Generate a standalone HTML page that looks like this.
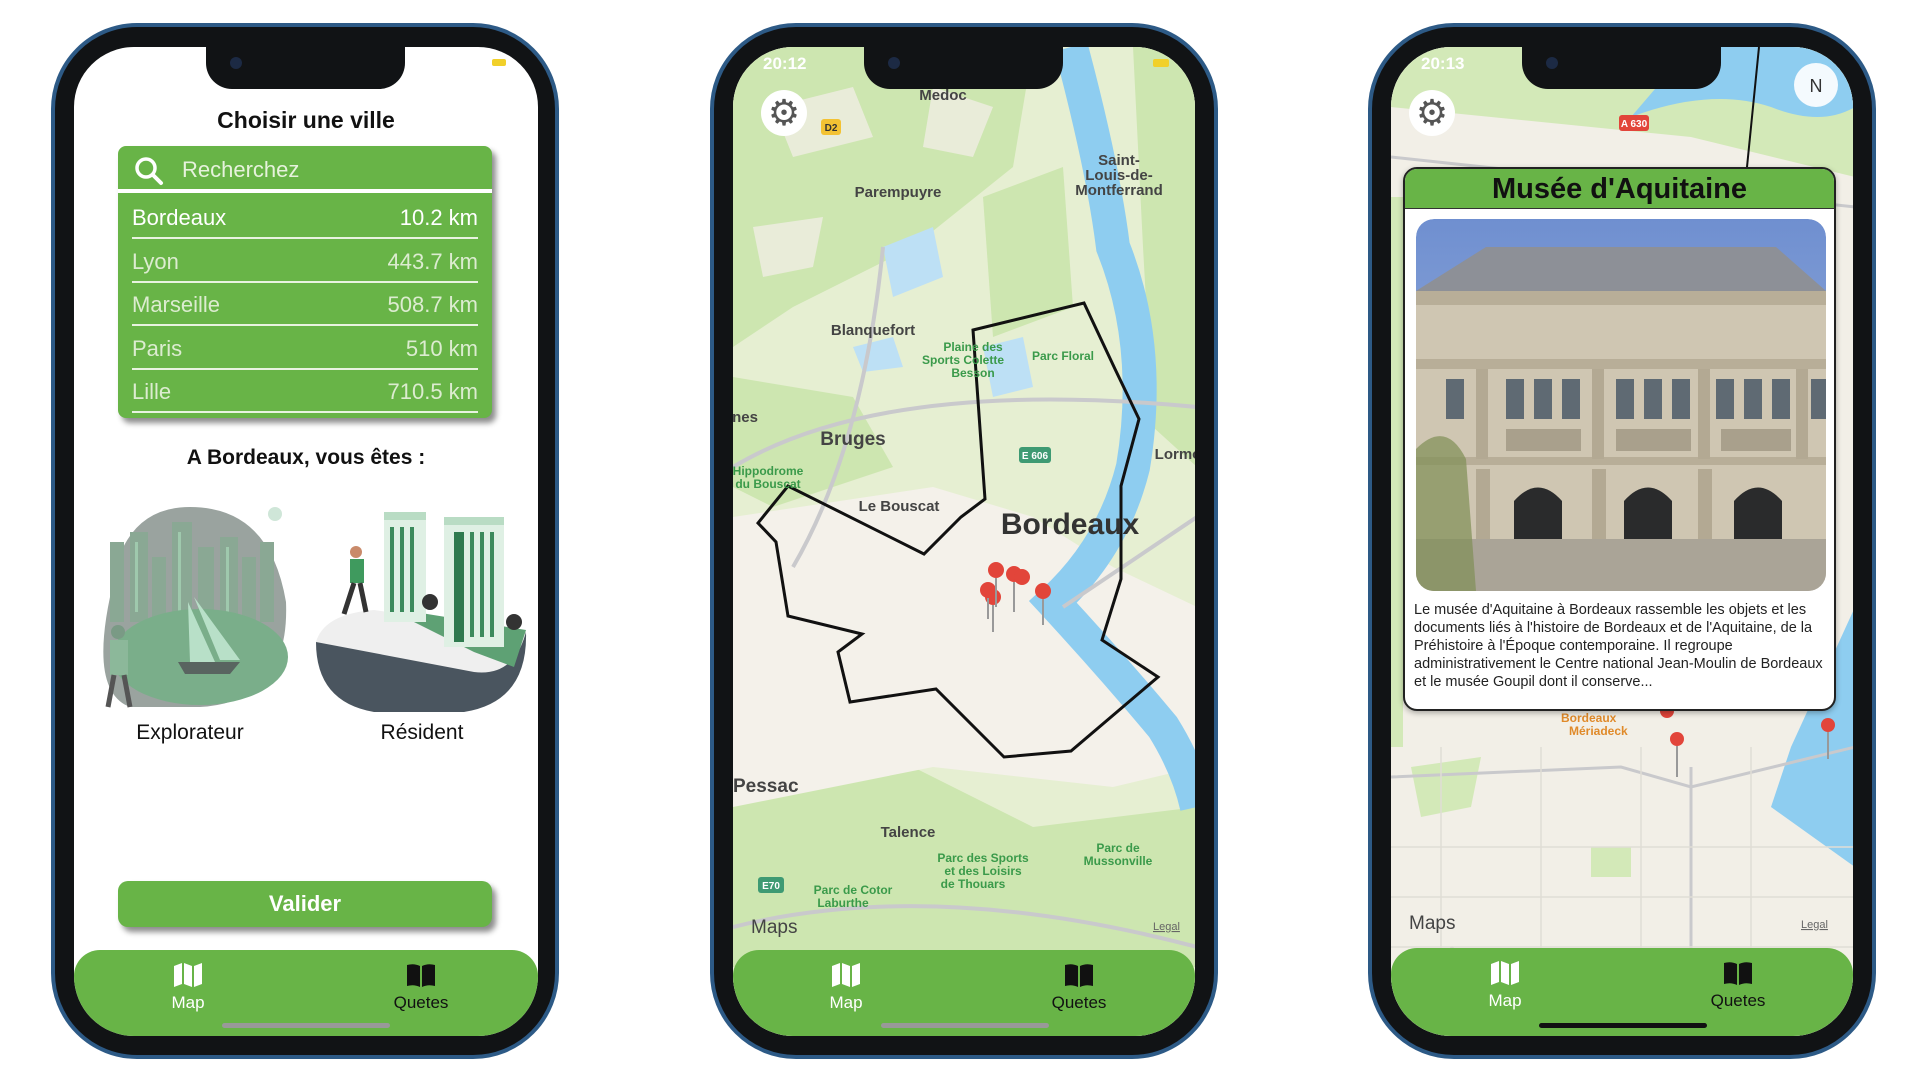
<!DOCTYPE html>
<html><head><meta charset="utf-8"><style>
*{margin:0;padding:0;box-sizing:border-box}
body{width:1920px;height:1080px;background:#fff;position:relative;overflow:hidden;font-family:"Liberation Sans",sans-serif}
.phone{position:absolute;top:23px;width:508px;height:1036px;border-radius:86px;background:#111315;border:4px solid #2d5a86}
.screen{position:absolute;overflow:hidden;border-radius:60px;background:#fff}
.notch{position:absolute;top:47px;width:199px;height:42px;background:#111315;border-radius:0 0 26px 26px;z-index:5}
.cam{position:absolute;top:10px;left:24px;width:12px;height:12px;border-radius:50%;background:#1c2a44}
.tab{position:absolute;left:0;right:0;bottom:0;height:86px;background:#68b447;z-index:3}
.tab .it{position:absolute;top:12px;text-align:center;font-size:17px;width:100px}
.home{position:absolute;bottom:8px;height:5px;border-radius:3px;background:#999;width:168px;z-index:4}
.row{position:absolute;left:14px;right:14px;height:43px;border-bottom:2px solid #e8f3e0;color:#dcecd0;font-size:22px;line-height:43px}
.row span{float:right}
</style></head><body>

<!-- PHONE 1 -->
<div class="phone" style="left:51px"></div>
<div class="screen" style="left:74px;top:47px;width:464px;height:989px">
  <div style="position:absolute;top:60px;width:100%;text-align:center;font-size:23px;font-weight:bold;color:#111">Choisir une ville</div>
  <div style="position:absolute;left:44px;top:99px;width:374px;height:272px;background:#68b447;border-radius:8px;box-shadow:4px 5px 6px rgba(0,0,0,.45)">
    <div style="position:absolute;left:0;right:0;top:0;height:47px;border-bottom:4px solid #fff">
      <svg style="position:absolute;left:16px;top:10px" width="30" height="30" viewBox="0 0 30 30"><circle cx="12" cy="12" r="9" fill="none" stroke="#fff" stroke-width="3.5"/><line x1="19" y1="19" x2="27" y2="27" stroke="#fff" stroke-width="4" stroke-linecap="round"/></svg>
      <div style="position:absolute;left:64px;top:11px;color:#e6f2dc;font-size:22px">Recherchez</div>
    </div>
    <div class="row" style="top:50px;color:#fff">Bordeaux<span>10.2 km</span></div>
    <div class="row" style="top:94px">Lyon<span>443.7 km</span></div>
    <div class="row" style="top:137px">Marseille<span>508.7 km</span></div>
    <div class="row" style="top:181px">Paris<span>510 km</span></div>
    <div class="row" style="top:224px">Lille<span>710.5 km</span></div>
  </div>
  <div style="position:absolute;top:399px;width:100%;text-align:center;font-size:21px;font-weight:bold;color:#111">A Bordeaux, vous êtes :</div>
  <svg style="position:absolute;left:16px;top:455px" width="200" height="210" viewBox="0 0 200 210">
    <path d="M20 95 Q30 5 100 5 Q180 5 196 100 Q200 200 110 205 L40 205 Q0 190 20 95Z" fill="#9aa39f"/>
    <g fill="#8aa894"><rect x="20" y="40" width="14" height="80"/><rect x="40" y="30" width="18" height="90"/><rect x="62" y="55" width="14" height="65"/><rect x="82" y="20" width="20" height="100"/><rect x="108" y="45" width="16" height="75"/><rect x="130" y="35" width="18" height="85"/><rect x="152" y="55" width="14" height="65"/><rect x="170" y="40" width="14" height="80"/></g>
    <g fill="#a8d8b8" opacity=".7"><rect x="45" y="40" width="3" height="70"/><rect x="88" y="30" width="3" height="80"/><rect x="136" y="45" width="3" height="70"/></g>
    <ellipse cx="110" cy="155" rx="88" ry="48" fill="#7aae8a"/>
    <path d="M98 100 L100 160 L125 160Z M104 95 L130 158 L150 158Z" fill="#b8e0c8"/>
    <path d="M88 160 L150 160 L140 172 L95 172Z" fill="#596460"/>
    <circle cx="28" cy="130" r="7" fill="#7a9a85"/><rect x="20" y="138" width="18" height="35" fill="#8cb89a"/><path d="M24 173 L18 205 M34 173 L40 205" stroke="#555" stroke-width="5"/>
    <circle cx="185" cy="12" r="7" fill="#cfe6d8"/>
  </svg>
  <svg style="position:absolute;left:240px;top:455px" width="214" height="210" viewBox="0 0 214 210">
    <path d="M2 140 Q2 200 60 210 L150 210 Q214 200 212 130 L60 110Z" fill="#4a555f"/>
    <path d="M2 140 Q10 112 60 108 L212 130 Q200 175 160 170Z" fill="#efefef"/>
    <path d="M70 105 L212 128 L200 165 L160 150 Z" fill="#5ea174"/>
    <rect x="70" y="10" width="42" height="110" fill="#dff0e4"/><rect x="70" y="10" width="42" height="8" fill="#b9dcc4"/>
    <rect x="130" y="15" width="60" height="130" fill="#dff0e4"/><rect x="130" y="15" width="60" height="8" fill="#b9dcc4"/><rect x="140" y="30" width="10" height="110" fill="#2f7a4f"/>
    <g fill="#3c8a5c"><rect x="76" y="25" width="4" height="85"/><rect x="86" y="25" width="4" height="85"/><rect x="96" y="25" width="4" height="85"/><rect x="156" y="30" width="4" height="105"/><rect x="166" y="30" width="4" height="105"/><rect x="176" y="30" width="4" height="105"/></g>
    <circle cx="116" cy="100" r="8" fill="#333"/><circle cx="200" cy="120" r="8" fill="#333"/>
    <circle cx="42" cy="50" r="6" fill="#c98a6a"/><rect x="36" y="57" width="14" height="24" fill="#3f9a5e"/><path d="M40 81 L30 112 M46 81 L52 110" stroke="#333" stroke-width="5"/>
  </svg>
  <div style="position:absolute;left:16px;width:200px;top:674px;text-align:center;font-size:21px;color:#111">Explorateur</div>
  <div style="position:absolute;left:248px;width:200px;top:674px;text-align:center;font-size:21px;color:#111">Résident</div>
  <div style="position:absolute;left:44px;top:834px;width:374px;height:46px;background:#68b447;border-radius:10px;box-shadow:4px 5px 6px rgba(0,0,0,.45);color:#fff;font-size:22px;font-weight:bold;text-align:center;line-height:46px">Valider</div>
  <div class="tab" style="border-radius:26px 26px 0 0">
    <div class="it" style="left:64px;color:#fff"><svg width="30" height="26" viewBox="0 0 30 26"><path d="M1 4 L9 1 L9 22 L1 25Z M11 1 L19 4 L19 25 L11 22Z M21 4 L29 1 L29 22 L21 25Z" fill="#fff"/></svg><br>Map</div>
    <div class="it" style="left:297px;color:#111"><svg width="30" height="26" viewBox="0 0 30 26"><path d="M1 3 Q8 1 14 4 L14 25 Q8 22 1 24Z M16 4 Q22 1 29 3 L29 24 Q22 22 16 25Z" fill="#111"/></svg><br>Quetes</div>
  </div>
  <div class="home" style="left:148px"></div>
  <div style="position:absolute;right:32px;top:12px;width:14px;height:7px;background:#f1d02a;border-radius:2px"></div>
</div>
<div class="notch" style="left:206px"><div class="cam"></div></div>

<!-- PHONE 2 -->
<div class="phone" style="left:710px"></div>
<div class="screen" style="left:733px;top:47px;width:462px;height:989px;background:#f3f0e8">
  <svg width="464" height="989" viewBox="0 0 464 989" style="position:absolute;left:0;top:0;font-family:'Liberation Sans',sans-serif">
    <rect width="464" height="989" fill="#e6efd2"/>
    <g fill="#cde6b0">
      <path d="M0 0 H300 L280 120 L180 200 L60 260 L0 300Z"/><path d="M250 150 L330 120 L340 260 L260 290Z"/>
      <path d="M400 0 H464 V420 L420 380 L410 200Z"/><path d="M0 330 L120 350 L160 420 L40 460 L0 440Z"/>
      <path d="M0 740 L180 720 L300 780 L464 760 V920 H0Z"/>
    </g>
    <g fill="#f0eee4" opacity=".8"><path d="M40 60 L120 40 L140 90 L60 110Z"/><path d="M200 40 L260 60 L240 110 L190 100Z"/><path d="M20 180 L90 170 L80 220 L30 230Z"/></g>
    <g fill="#bde0f5"><path d="M150 200 L200 180 L210 230 L160 250Z"/><path d="M250 300 L290 290 L300 340 L260 350Z"/><path d="M120 300 L160 290 L170 320 L130 325Z"/></g>
    <path d="M0 470 L200 440 L300 470 L380 520 L464 560 V720 L380 740 L200 720 L0 760Z" fill="#f4f1ea"/>
    <path d="M338 0 Q370 120 380 200 Q420 300 400 420 Q380 500 320 555 Q380 620 430 680 Q455 720 464 760" fill="none" stroke="#8ecdf0" stroke-width="34"/>
    <g fill="none" stroke="#c9c9cc" stroke-width="4"><path d="M0 420 Q150 330 464 360"/><path d="M0 880 Q200 830 464 900"/><path d="M150 200 Q130 400 60 520"/><path d="M464 470 L330 560"/></g>
    <path d="M240 283 L351 256 L382 322 L406 372 L388 439 L388 532 L369 593 L425 630 L338 704 L271 710 L203 642 L117 655 L105 605 L129 587 L55 569 L43 495 L25 476 L55 439 L191 507 L228 470 L252 452Z" fill="none" stroke="#111" stroke-width="3"/>
    <g font-size="15" fill="#444" font-weight="bold" text-anchor="middle">
      <text x="165" y="150">Parempuyre</text><text x="140" y="288" >Blanquefort</text><text x="120" y="398" font-size="19">Bruges</text><text x="166" y="464">Le Bouscat</text><text x="175" y="790">Talence</text><text x="210" y="53">Medoc</text>
      <text x="386" y="118">Saint-</text><text x="386" y="133">Louis-de-</text><text x="386" y="148">Montferrand</text>
      <text x="337" y="487" font-size="30" fill="#333">Bordeaux</text><text x="0" y="745" font-size="19" text-anchor="start">Pessac</text>
      <text x="445" y="412">Lormo</text><text x="12" y="375">nes</text>
    </g>
    <g font-size="12" fill="#3a9a4a" text-anchor="middle" font-weight="bold">
      <text x="240" y="304">Plaine des</text><text x="230" y="317">Sports Colette</text><text x="240" y="330">Besson</text><text x="330" y="313">Parc Floral</text>
      <text x="35" y="428">Hippodrome</text><text x="35" y="441">du Bouscat</text>
      <text x="250" y="815">Parc des Sports</text><text x="250" y="828">et des Loisirs</text><text x="240" y="841">de Thouars</text>
      <text x="120" y="847">Parc de Cotor</text><text x="110" y="860">Laburthe</text><text x="385" y="805">Parc de</text><text x="385" y="818">Mussonville</text>
    </g>
    <rect x="286" y="400" width="32" height="16" rx="3" fill="#3e9a73"/><text x="302" y="412" font-size="10" fill="#fff" text-anchor="middle" font-weight="bold">E 606</text>
    <rect x="25" y="830" width="26" height="16" rx="3" fill="#3e9a73"/><text x="38" y="842" font-size="10" fill="#fff" text-anchor="middle" font-weight="bold">E70</text>
    <rect x="88" y="72" width="20" height="16" rx="3" fill="#f3c233"/><text x="98" y="84" font-size="10" fill="#333" text-anchor="middle" font-weight="bold">D2</text>
    <g fill="#e2453a"><circle cx="263" cy="523" r="8"/><circle cx="281" cy="527" r="8"/><circle cx="289" cy="530" r="8"/><circle cx="255" cy="543" r="8"/><circle cx="260" cy="550" r="8"/><circle cx="310" cy="544" r="8"/></g>
    <g stroke="#999" stroke-width="2"><path d="M263 531 V560 M281 535 V565 M255 551 V572 M260 558 V585 M310 552 V578"/></g>
    <text x="18" y="886" font-size="19" fill="#444"> Maps</text><text x="420" y="883" font-size="11" fill="#666" text-decoration="underline">Legal</text>
    <text x="30" y="22" font-size="17" fill="#fff" font-weight="bold">20:12</text>
    <rect x="420" y="12" width="16" height="8" rx="2" fill="#f1d02a"/>
  </svg>
  <div style="position:absolute;left:28px;top:43px;width:46px;height:46px;border-radius:50%;background:#fff;text-align:center;line-height:46px;font-size:36px;color:#555">⚙</div>
  <div class="tab" style="border-radius:26px 26px 0 0">
    <div class="it" style="left:63px;color:#fff"><svg width="30" height="26" viewBox="0 0 30 26"><path d="M1 4 L9 1 L9 22 L1 25Z M11 1 L19 4 L19 25 L11 22Z M21 4 L29 1 L29 22 L21 25Z" fill="#fff"/></svg><br>Map</div>
    <div class="it" style="left:296px;color:#111"><svg width="30" height="26" viewBox="0 0 30 26"><path d="M1 3 Q8 1 14 4 L14 25 Q8 22 1 24Z M16 4 Q22 1 29 3 L29 24 Q22 22 16 25Z" fill="#111"/></svg><br>Quetes</div>
  </div>
  <div class="home" style="left:148px"></div>
</div>
<div class="notch" style="left:864px"><div class="cam"></div></div>

<!-- PHONE 3 -->
<div class="phone" style="left:1368px"></div>
<div class="screen" style="left:1391px;top:47px;width:462px;height:989px;background:#f3f0e8">
  <svg width="464" height="989" viewBox="0 0 464 989" style="position:absolute;left:0;top:0;font-family:'Liberation Sans',sans-serif">
    <rect width="464" height="989" fill="#f2efe7"/>
    <path d="M0 0 H464 V130 L300 90 L0 60Z" fill="#d3e9b8"/>
    <path d="M240 70 Q320 40 380 60 Q430 80 464 60 V0 H300Z" fill="#8ecdf0"/>
    <path d="M0 150 H12 V700 H0Z" fill="#d3e9b8"/>
    <path d="M464 560 L400 700 L380 760 L464 820Z" fill="#8ecdf0"/>
    <g fill="#d3e9b8"><path d="M20 720 L90 710 L80 760 L30 770Z"/><path d="M200 800 L240 800 L240 830 L200 830Z"/></g>
    <g fill="none" stroke="#c9c9cc" stroke-width="3"><path d="M0 110 L464 160"/><path d="M0 730 L230 720 L300 740 L464 700"/><path d="M60 900 L120 960"/><path d="M300 720 V950"/></g>
    <g stroke="#e0ddd5" stroke-width="1.5"><path d="M0 800 H464 M0 850 H464 M0 900 H464 M50 700 V960 M150 700 V960 M250 700 V960 M360 700 V960"/></g>
    <path d="M25 950 L90 920" stroke="#111" stroke-width="3"/><path d="M368 0 L355 130" stroke="#111" stroke-width="2"/>
    <g fill="#e2453a"><circle cx="276" cy="664" r="7"/><circle cx="286" cy="692" r="7"/><circle cx="437" cy="678" r="7"/></g>
    <g stroke="#999" stroke-width="2"><path d="M286 699 V730 M437 685 V712"/></g>
    <text x="170" y="675" font-size="12" fill="#e08a2a" font-weight="bold">Bordeaux</text><text x="178" y="688" font-size="12" fill="#e08a2a" font-weight="bold">Mériadeck</text>
    <rect x="228" y="68" width="30" height="16" rx="3" fill="#e2453a"/><text x="243" y="80" font-size="10" fill="#fff" text-anchor="middle" font-weight="bold">A 630</text>
    <text x="18" y="882" font-size="19" fill="#444"> Maps</text><text x="410" y="881" font-size="11" fill="#666" text-decoration="underline">Legal</text>
    <text x="30" y="22" font-size="17" fill="#fff" font-weight="bold">20:13</text>
    <circle cx="425" cy="38" r="22" fill="#fff" opacity=".9"/><text x="425" y="45" font-size="18" text-anchor="middle" fill="#333">N</text>
  </svg>
  <div style="position:absolute;left:18px;top:43px;width:46px;height:46px;border-radius:50%;background:#fff;text-align:center;line-height:46px;font-size:36px;color:#555">⚙</div>
  <div style="position:absolute;left:12px;top:120px;width:433px;height:544px;background:#fff;border:2px solid #222;border-radius:14px;overflow:hidden;box-shadow:0 2px 6px rgba(0,0,0,.3)">
    <div style="height:40px;background:#68b447;border-bottom:1px solid #333;text-align:center;font-size:29px;font-weight:bold;color:#111;line-height:40px">Musée d'Aquitaine</div>
    <svg style="position:absolute;left:11px;top:50px;border-radius:18px" width="410" height="372" viewBox="0 0 410 372">
      <defs><linearGradient id="sk" x1="0" y1="0" x2="0" y2="1"><stop offset="0" stop-color="#6f8fd0"/><stop offset="1" stop-color="#a9bde0"/></linearGradient></defs>
      <rect width="410" height="372" rx="18" fill="url(#sk)"/>
      <path d="M70 28 H360 L410 72 H0Z" fill="#8d9097"/>
      <rect x="0" y="72" width="410" height="300" fill="#cfc6b2"/>
      <rect x="0" y="72" width="410" height="14" fill="#b8ae98"/><rect x="0" y="140" width="410" height="10" fill="#b8ae98"/><rect x="0" y="238" width="410" height="8" fill="#b8ae98"/>
      <g fill="#5f6a73"><rect x="30" y="160" width="18" height="40"/><rect x="90" y="160" width="18" height="40"/><rect x="118" y="160" width="18" height="40"/><rect x="146" y="160" width="18" height="40"/><rect x="200" y="160" width="18" height="40"/><rect x="228" y="160" width="18" height="40"/><rect x="256" y="160" width="18" height="40"/><rect x="300" y="160" width="18" height="40"/><rect x="328" y="160" width="18" height="40"/><rect x="356" y="160" width="18" height="40"/><rect x="395" y="160" width="15" height="40"/></g>
      <g fill="#b3a993"><rect x="60" y="150" width="12" height="90"/><rect x="176" y="150" width="12" height="90"/><rect x="282" y="150" width="12" height="90"/><rect x="380" y="150" width="12" height="90"/><rect x="60" y="250" width="14" height="70"/><rect x="176" y="250" width="14" height="70"/><rect x="282" y="250" width="14" height="70"/></g>
      <g fill="#a9a08c"><rect x="90" y="210" width="75" height="22"/><rect x="200" y="210" width="75" height="22"/><rect x="305" y="210" width="70" height="22"/></g>
      <g fill="#2a2b2c"><path d="M98 330 V282 Q122 255 146 282 V330Z"/><path d="M208 330 V282 Q232 255 256 282 V330Z"/><path d="M318 330 V282 Q342 255 366 282 V330Z"/></g>
      <rect x="0" y="320" width="410" height="52" fill="#aaa497"/>
      <path d="M0 230 Q30 200 50 240 L60 372 H0Z" fill="#7f8f55" opacity=".7"/>
    </svg>
    <div style="position:absolute;left:9px;top:432px;width:420px;font-size:14.5px;line-height:18px;color:#222">Le musée d'Aquitaine à Bordeaux rassemble les objets et les documents liés à l'histoire de Bordeaux et de l'Aquitaine, de la Préhistoire à l'Époque contemporaine. Il regroupe administrativement le Centre national Jean-Moulin de Bordeaux et le musée Goupil dont il conserve...</div>
  </div>
  <div class="tab" style="border-radius:26px 26px 0 0;height:88px">
    <div class="it" style="left:64px;color:#fff"><svg width="30" height="26" viewBox="0 0 30 26"><path d="M1 4 L9 1 L9 22 L1 25Z M11 1 L19 4 L19 25 L11 22Z M21 4 L29 1 L29 22 L21 25Z" fill="#fff"/></svg><br>Map</div>
    <div class="it" style="left:297px;color:#111"><svg width="30" height="26" viewBox="0 0 30 26"><path d="M1 3 Q8 1 14 4 L14 25 Q8 22 1 24Z M16 4 Q22 1 29 3 L29 24 Q22 22 16 25Z" fill="#111"/></svg><br>Quetes</div>
  </div>
  <div class="home" style="left:148px;background:#111"></div>
</div>
<div class="notch" style="left:1522px"><div class="cam"></div></div>
</body></html>
